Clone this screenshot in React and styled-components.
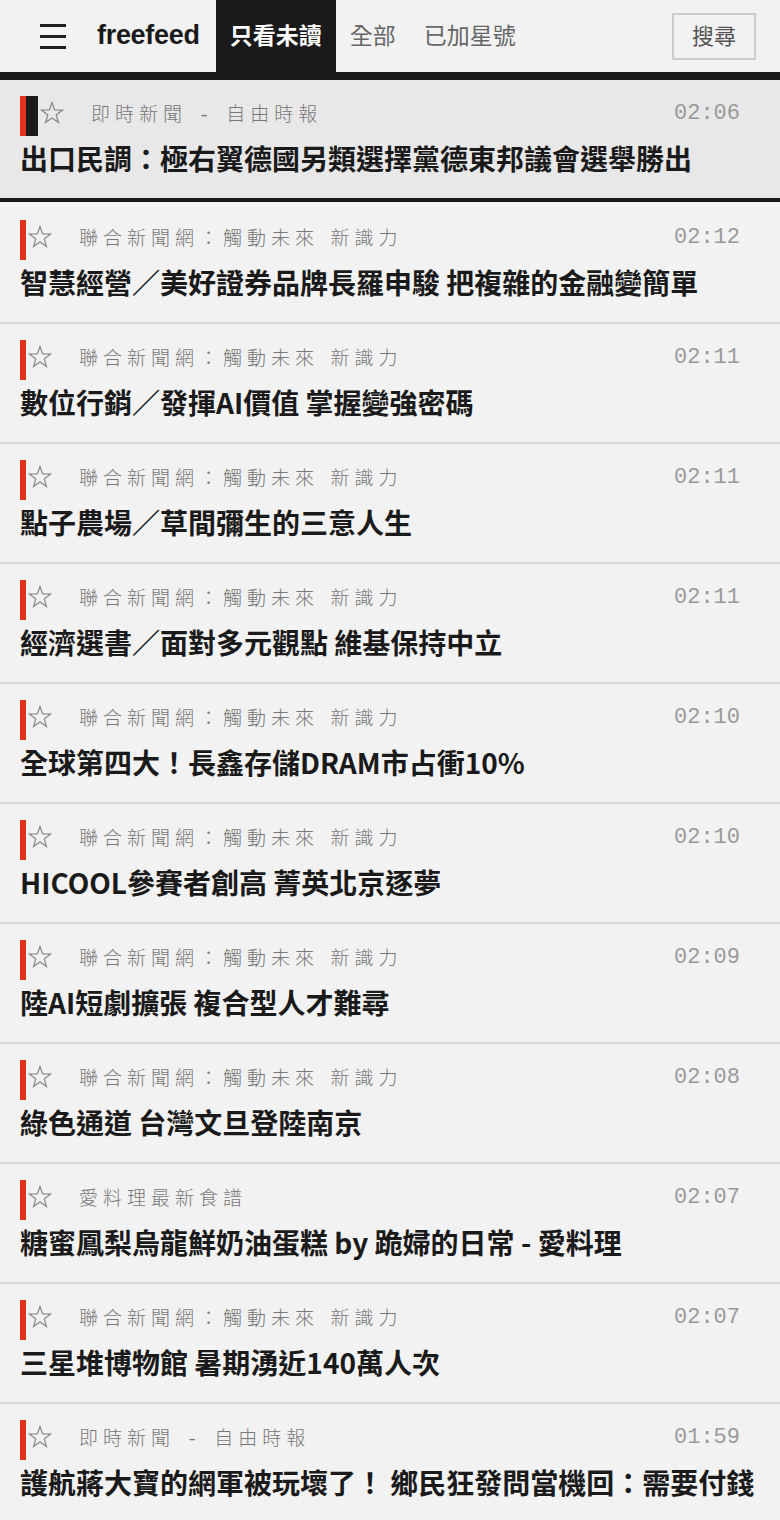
import React from "react";
import styled, { createGlobalStyle } from "styled-components";

const Global = createGlobalStyle`
	body{
		margin:0;
		background:#f2f2f2;
		font-family:"Noto Sans CJK TC", "Liberation Sans", sans-serif;
	}
`;

const items = [
	{ source: "即時新聞 - 自由時報", time: "02:06", title: "出口民調：極右翼德國另類選擇黨德東邦議會選舉勝出", selected: true },
	{ source: "聯合新聞網：觸動未來 新識力", time: "02:12", title: "智慧經營／美好證券品牌長羅申駿 把複雜的金融變簡單" },
	{ source: "聯合新聞網：觸動未來 新識力", time: "02:11", title: "數位行銷／發揮AI價值 掌握變強密碼" },
	{ source: "聯合新聞網：觸動未來 新識力", time: "02:11", title: "點子農場／草間彌生的三意人生" },
	{ source: "聯合新聞網：觸動未來 新識力", time: "02:11", title: "經濟選書／面對多元觀點 維基保持中立" },
	{ source: "聯合新聞網：觸動未來 新識力", time: "02:10", title: "全球第四大！長鑫存儲DRAM市占衝10%" },
	{ source: "聯合新聞網：觸動未來 新識力", time: "02:10", title: "HICOOL參賽者創高 菁英北京逐夢" },
	{ source: "聯合新聞網：觸動未來 新識力", time: "02:09", title: "陸AI短劇擴張 複合型人才難尋" },
	{ source: "聯合新聞網：觸動未來 新識力", time: "02:08", title: "綠色通道 台灣文旦登陸南京" },
	{ source: "愛料理最新食譜", time: "02:07", title: "糖蜜鳳梨烏龍鮮奶油蛋糕 by 跪婦的日常 - 愛料理" },
	{ source: "聯合新聞網：觸動未來 新識力", time: "02:07", title: "三星堆博物館 暑期湧近140萬人次" },
	{ source: "即時新聞 - 自由時報", time: "01:59", title: "護航蔣大寶的網軍被玩壞了！ 鄉民狂發問當機回：需要付錢" },
];

const App = () => {
	return (
		<>
			<Global />
			<Header>
				<Menu>
					<span />
					<span />
					<span />
				</Menu>
				<Logo>freefeed</Logo>
				<Tab active>只看未讀</Tab>
				<Tab>全部</Tab>
				<Tab>已加星號</Tab>
				<SearchButton>搜尋</SearchButton>
			</Header>
			<List>
				{items.map((item, i) => (
					<Item key={i} selected={item.selected}>
						<Meta>
							<Marker selected={item.selected} />
							<Star viewBox="0 0 24 24">
								<polygon points="12,1.5 14.6,9 22.5,9.1 16.2,13.9 18.5,21.6 12,17 5.5,21.6 7.8,13.9 1.5,9.1 9.4,9" />
							</Star>
							<Source>{item.source}</Source>
							<Time>{item.time}</Time>
						</Meta>
						<Title>{item.title}</Title>
					</Item>
				))}
			</List>
		</>
	);
};

const Header = styled.header`
	display:flex;
	align-items:center;
	height:72px;
	border-bottom:8px solid #1b1a1a;
	background:#f2f2f2;
`;

const Menu = styled.div`
	display:flex;
	flex-direction:column;
	justify-content:space-between;
	width:26px;
	height:25px;
	margin:0 31px 0 40px;
	span{
		display:block;
		height:3px;
		background:#1f1f1f;
	}
`;

const Logo = styled.div`
	font-family:"Liberation Sans", Arial, sans-serif;
	font-weight:700;
	font-size:27px;
	letter-spacing:-0.3px;
	color:#1b1a1a;
	margin-right:16px;
	padding-bottom:2px;
`;

const Tab = styled.div`
	display:flex;
	align-items:center;
	align-self:stretch;
	padding:0 14px 4px;
	font-size:23px;
	font-weight:${p => (p.active ? 700 : 400)};
	color:${p => (p.active ? "#ffffff" : "#666666")};
	background:${p => (p.active ? "#1b1a1a" : "transparent")};
`;

const SearchButton = styled.button`
	margin-left:auto;
	margin-right:24px;
	width:84px;
	height:47px;
	border:2px solid #cccccc;
	background:#f2f2f2;
	font-family:"Noto Sans CJK TC", sans-serif;
	font-size:22px;
	color:#555555;
	padding:0 0 4px;
`;

const List = styled.main`
	display:flex;
	flex-direction:column;
`;

const Item = styled.article`
	padding:16px 20px 20px;
	background:${p => (p.selected ? "#e8e8e8" : "#f2f2f2")};
	border-bottom:${p => (p.selected ? "4px solid #1b1a1a" : "2px solid #d8d8d8")};
	margin-bottom:${p => (p.selected ? "2px" : "0")};
`;

const Meta = styled.div`
	display:flex;
	align-items:center;
	height:40px;
`;

const Marker = styled.div`
	width:6px;
	height:40px;
	background:#e23219;
	border-right:${p => (p.selected ? "12px solid #1b1a1a" : "0")};
`;

const Star = styled.svg`
	width:24px;
	height:24px;
	margin:0 0 6px 2px;
	fill:none;
	stroke:#888888;
	stroke-width:1.2;
	stroke-linejoin:miter;
`;

const Source = styled.span`
	margin:0 0 7px 27px;
	font-family:"Liberation Mono", "Noto Sans CJK TC", monospace;
	font-size:19px;
	font-weight:300;
	letter-spacing:5px;
	word-spacing:-5px;
	color:#777777;
	white-space:nowrap;
`;

const Time = styled.span`
	margin:0 20px 6px auto;
	font-family:"Liberation Mono", monospace;
	font-size:22px;
	color:#999999;
`;

const Title = styled.h2`
	margin:2px 0 0;
	font-size:28px;
	line-height:40px;
	font-weight:700;
	color:#1b1a1a;
	white-space:nowrap;
`;

export default App;
